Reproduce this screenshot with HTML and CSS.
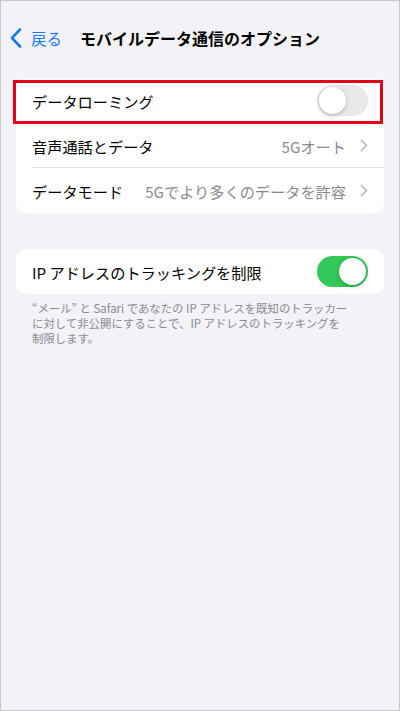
FILE: index.html
```html
<!DOCTYPE html>
<html lang="ja">
<head>
<meta charset="utf-8">
<link rel="stylesheet" href="styles.css">
</head>
<body>
<div class="screen">
  <header class="nav">
    <div class="back">
      <svg class="back-chev" width="12" height="20" viewBox="0 0 12 20"><path d="M10 1.5 L2 10 L10 18.5" fill="none" stroke="#1a7cf5" stroke-width="2.6" stroke-linecap="round" stroke-linejoin="round"/></svg>
      <span class="back-text">戻る</span>
    </div>
    <h1 class="title">モバイルデータ通信のオプション</h1>
  </header>

  <section class="group">
    <div class="row row-highlight">
      <span class="label">データローミング</span>
      <span class="toggle"><span class="knob"></span></span>
    </div>
    <div class="row sep">
      <span class="label">音声通話とデータ</span>
      <span class="value">5Gオート</span>
      <svg class="chev" width="8" height="13" viewBox="0 0 8 13"><path d="M1.5 1.5 L6.5 6.5 L1.5 11.5" fill="none" stroke="#c4c4c7" stroke-width="1.8" stroke-linecap="round" stroke-linejoin="round"/></svg>
    </div>
    <div class="row">
      <span class="label">データモード</span>
      <span class="value">5Gでより多くのデータを許容</span>
      <svg class="chev" width="8" height="13" viewBox="0 0 8 13"><path d="M1.5 1.5 L6.5 6.5 L1.5 11.5" fill="none" stroke="#c4c4c7" stroke-width="1.8" stroke-linecap="round" stroke-linejoin="round"/></svg>
    </div>
  </section>

  <section class="group group2">
    <div class="row">
      <span class="label">IP アドレスのトラッキングを制限</span>
      <span class="toggle on"><span class="knob"></span></span>
    </div>
  </section>
  <p class="footnote">“メール” と Safari であなたの IP アドレスを既知のトラッカー<br>に対して非公開にすることで、IP アドレスのトラッキングを<br>制限します。</p>
</div>
</body>
</html>
```
FILE: styles.css
```css
* { box-sizing: border-box; }
html, body { margin: 0; padding: 0; }
body {
  font-family: "Noto Sans CJK JP", "Noto Sans", sans-serif;
  background: #f2f2f7;
}
.screen {
  width: 400px;
  height: 711px;
  border: 1px solid #c9c9cc;
  background: #f2f2f7;
  padding-top: 15px;
}
.nav {
  position: relative;
  height: 44px;
  display: flex;
  align-items: center;
  justify-content: center;
}
.back {
  position: absolute;
  left: 9px;
  top: 0;
  height: 44px;
  display: flex;
  align-items: center;
  gap: 9px;
}
.back-text {
  color: #1a7cf5;
  font-size: 15.5px;
}
.title {
  margin: 0;
  font-size: 16px;
  font-weight: 700;
  color: #000;
  letter-spacing: 0;
}
.group {
  margin: 18px 15px 0 15px;
  background: #fff;
  border-radius: 10px;
}
.group2 { margin-top: 36px; }
.row {
  position: relative;
  height: 45px;
  display: flex;
  align-items: center;
  padding: 0 16px 0 16px;
}
.row.sep::after {
  content: "";
  position: absolute;
  left: 16px;
  right: 0;
  bottom: 0;
  height: 1px;
  background: #e2e2e6;
}
.row-highlight::before {
  content: "";
  position: absolute;
  left: -3px;
  right: 1px;
  top: 2px;
  bottom: -1px;
  border: 3px solid #e8001a;
  pointer-events: none;
}
.label {
  font-size: 15.2px;
  color: #000;
  flex: 1;
  white-space: nowrap;
}
.value {
  font-size: 15.2px;
  color: #8a8a8e;
  white-space: nowrap;
  margin-right: 14px;
}
.chev { flex: none; }
.toggle {
  position: relative;
  width: 51px;
  height: 31px;
  border-radius: 16px;
  background: #e9e9eb;
  flex: none;
}
.toggle .knob {
  position: absolute;
  top: 2px;
  left: 2px;
  width: 27px;
  height: 27px;
  border-radius: 50%;
  background: #fff;
  box-shadow: 0 2px 5px rgba(0,0,0,0.18), 0 0 0 0.5px rgba(0,0,0,0.06);
}
.toggle.on { background: #34c759; }
.toggle.on .knob { left: 22px; }
.footnote {
  margin: 7px 0 0 31px;
  font-size: 11.4px;
  line-height: 15px;
  color: #8a8a8e;
}
```
